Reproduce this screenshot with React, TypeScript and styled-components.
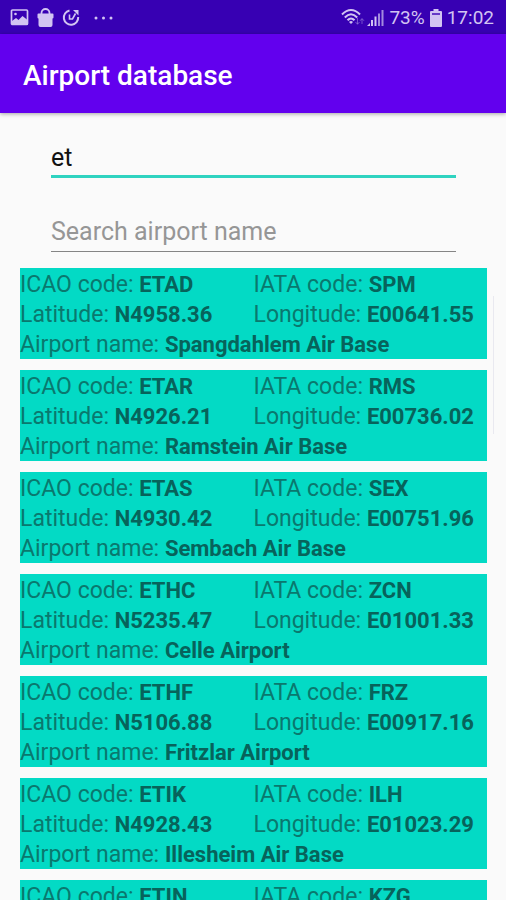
import React, { useState } from "react";
import styled, { createGlobalStyle } from "styled-components";

const GlobalStyle = createGlobalStyle`
  *, *::before, *::after { box-sizing: border-box; }
  body {
    margin: 0;
    background: #fafafa;
    font-family: Roboto, "Liberation Sans", sans-serif;
  }
`;

const Screen = styled.div`
  display: flex;
  flex-direction: column;
  height: 100vh;
  overflow: hidden;
`;

const StatusBar = styled.div`
  flex: none;
  display: flex;
  justify-content: space-between;
  align-items: center;
  height: 34px;
  padding: 1px 12px 0 10px;
  background: #3700b3;
  color: #d2c4f2;
  font-size: 19px;
  line-height: 24px;
`;

const StatusGroup = styled.div<{ $gap: number }>`
  display: flex;
  align-items: center;
  gap: ${(p) => p.$gap}px;

  svg {
    display: block;
  }
`;

const AppBar = styled.header`
  flex: none;
  display: flex;
  align-items: center;
  height: 79px;
  padding: 4px 23px 0;
  background: #6200ee;
  box-shadow: 0 1px 4px rgba(0, 0, 0, 0.35);
`;

const Title = styled.h1`
  margin: 0;
  color: #fff;
  font-size: 28px;
  font-weight: 500;
  line-height: 34px;
`;

const SearchForm = styled.form`
  flex: none;
  display: flex;
  flex-direction: column;
  gap: 34px;
  padding: 27px 50px 16px 51px;
`;

const SearchField = styled.input<{ $active?: boolean }>`
  width: 100%;
  height: ${(p) => (p.$active ? 38 : 40)}px;
  padding: 0 0 1px;
  border: 0;
  border-bottom: ${(p) => (p.$active ? "3px solid #2fd3c0" : "1px solid #858585")};
  border-radius: 0;
  outline: 0;
  background: transparent;
  color: #111;
  font: 400 25px/32px Roboto, "Liberation Sans", sans-serif;

  &::placeholder {
    color: #969696;
    opacity: 1;
  }
`;

const ListArea = styled.main`
  flex: 1;
  min-height: 0;
  display: flex;
  padding: 0 12px 0 20px;
`;

const AirportList = styled.ul`
  flex: 1;
  min-width: 0;
  margin: 0;
  padding: 0;
  display: flex;
  flex-direction: column;
  gap: 11px;
  list-style: none;
  overflow-y: auto;
  scrollbar-width: none;
`;

const AirportCard = styled.li`
  flex: none;
  display: grid;
  grid-template-columns: 1fr 1fr;
  padding: 2px 0 0;
  height: 91px;
  background: #03dac5;
  color: #0a786e;
  font-size: 23px;
  line-height: 30px;
  white-space: nowrap;
`;

const Entry = styled.div<{ $wide?: boolean }>`
  grid-column: ${(p) => (p.$wide ? "1 / -1" : "auto")};
  height: 30px;
`;

const Value = styled.strong`
  color: #07635b;
  font-size: 22px;
  font-weight: 700;
`;

const ScrollThumb = styled.div`
  flex: none;
  width: 1px;
  height: 138px;
  margin: 28px 0 0 6px;
  background: #e9e9f0;
`;

const PictureIcon = () => (
  <svg width="19" height="17" viewBox="0 0 19 17" aria-hidden="true">
    <rect x="1.5" y="1" width="16" height="14.500" rx="1" fill="none" stroke="currentColor" strokeWidth="1.700" />
    <path d="M2 14V12l4-3 2.500 2 4-4 5 4v4H2z" fill="currentColor" />
    <circle cx="5.500" cy="5" r="1.300" fill="currentColor" />
  </svg>
);

const BagIcon = () => (
  <svg width="17" height="20" viewBox="0 0 17 20" aria-hidden="true">
    <path d="M4.500 7V5a4 4 0 0 1 8 0v2" fill="none" stroke="currentColor" strokeWidth="1.800" />
    <path d="M1.500 5.500h14q1 0 1 1v3q0 1-1 1V17q0 2-2 2h-10q-2 0-2-2v-6.500q-1 0-1-1v-3q0-1 1-1z" fill="currentColor" />
  </svg>
);

const SyncIcon = () => (
  <svg width="18" height="19" viewBox="0 0 18 19" fill="none" stroke="currentColor" aria-hidden="true">
    <path d="M7.500 2.500A7.200 7.200 0 1 0 16.200 9" strokeWidth="2" />
    <path d="M7.500 6.500v4.500h3L13.500 5.500" strokeWidth="1.600" />
    <path d="M11 2H16.500V7.500z" fill="currentColor" stroke="none" />
  </svg>
);

const MoreIcon = () => (
  <svg width="25" height="4" viewBox="0 0 25 4" fill="currentColor" aria-hidden="true">
    <circle cx="8" cy="2" r="1.500" />
    <circle cx="15.500" cy="2" r="1.500" />
    <circle cx="23" cy="2" r="1.500" />
  </svg>
);

const WifiIcon = () => (
  <svg width="24" height="19" viewBox="0 0 24 19" fill="none" stroke="currentColor" aria-hidden="true">
    <path d="M1 6.500Q10 -2.500 19 6.500" strokeWidth="2" />
    <path d="M3.800 9.500Q10 3 16.200 9.500" strokeWidth="2" />
    <path d="M6.500 12.300Q10 8.500 13.500 12.300" strokeWidth="2" />
    <path d="M8 14Q10 12 12 14L10 16z" fill="currentColor" stroke="none" />
    <path d="M16.500 10v6M14.500 14l2 2.300 2-2.300M21 16v-5M19 12.800l2-2.300 2 2.300" opacity=".4" />
  </svg>
);

const SignalIcon = () => (
  <svg width="17" height="18" viewBox="0 0 17 18" fill="currentColor" aria-hidden="true">
    <path d="M0 17l3-3v3z" />
    <rect x="4" y="11" width="2" height="6" />
    <rect x="7.500" y="7.500" width="2" height="9.500" />
    <rect x="11" y="4.500" width="2" height="12.500" opacity=".7" />
    <rect x="14.500" y="1" width="2" height="16" opacity=".7" />
  </svg>
);

const BatteryIcon = () => (
  <svg width="12" height="18" viewBox="0 0 12 18" aria-hidden="true">
    <path d="M3.500 0h5v2H11q1 0 1 1v14q0 1-1 1H1q-1 0-1-1V3q0-1 1-1h2.500z" fill="currentColor" />
    <rect x="2" y="4" width="8" height="2" fill="#3700b3" opacity=".7" />
  </svg>
);

interface Airport {
  icao: string;
  iata: string;
  latitude: string;
  longitude: string;
  name: string;
}

const airports: Airport[] = [
  { icao: "ETAD", iata: "SPM", latitude: "N4958.36", longitude: "E00641.55", name: "Spangdahlem Air Base" },
  { icao: "ETAR", iata: "RMS", latitude: "N4926.21", longitude: "E00736.02", name: "Ramstein Air Base" },
  { icao: "ETAS", iata: "SEX", latitude: "N4930.42", longitude: "E00751.96", name: "Sembach Air Base" },
  { icao: "ETHC", iata: "ZCN", latitude: "N5235.47", longitude: "E01001.33", name: "Celle Airport" },
  { icao: "ETHF", iata: "FRZ", latitude: "N5106.88", longitude: "E00917.16", name: "Fritzlar Airport" },
  { icao: "ETIK", iata: "ILH", latitude: "N4928.43", longitude: "E01023.29", name: "Illesheim Air Base" },
  { icao: "ETIN", iata: "KZG", latitude: "N4944.59", longitude: "E01012.05", name: "Kitzingen Airport" },
];

export default function App() {
  const [code, setCode] = useState("et");
  const [name, setName] = useState("");

  return (
    <>
      <GlobalStyle />
      <Screen>
        <StatusBar>
          <StatusGroup $gap={8}>
            <PictureIcon />
            <BagIcon />
            <SyncIcon />
            <MoreIcon />
          </StatusGroup>
          <StatusGroup $gap={5}>
            <StatusGroup $gap={2}>
              <WifiIcon />
              <SignalIcon />
            </StatusGroup>
            <span>73%</span>
            <BatteryIcon />
            <span>17:02</span>
          </StatusGroup>
        </StatusBar>
        <AppBar>
          <Title>Airport database</Title>
        </AppBar>
        <SearchForm onSubmit={(e) => e.preventDefault()}>
          <SearchField
            $active
            type="text"
            aria-label="Search airport code"
            value={code}
            onChange={(e) => setCode(e.target.value)}
          />
          <SearchField
            type="text"
            aria-label="Search airport name"
            placeholder="Search airport name"
            value={name}
            onChange={(e) => setName(e.target.value)}
          />
        </SearchForm>
        <ListArea>
          <AirportList>
            {airports.map((a) => (
              <AirportCard key={a.icao}>
                <Entry>ICAO code: <Value>{a.icao}</Value></Entry>
                <Entry>IATA code: <Value>{a.iata}</Value></Entry>
                <Entry>Latitude: <Value>{a.latitude}</Value></Entry>
                <Entry>Longitude: <Value>{a.longitude}</Value></Entry>
                <Entry $wide>Airport name: <Value>{a.name}</Value></Entry>
              </AirportCard>
            ))}
          </AirportList>
          <ScrollThumb />
        </ListArea>
      </Screen>
    </>
  );
}
